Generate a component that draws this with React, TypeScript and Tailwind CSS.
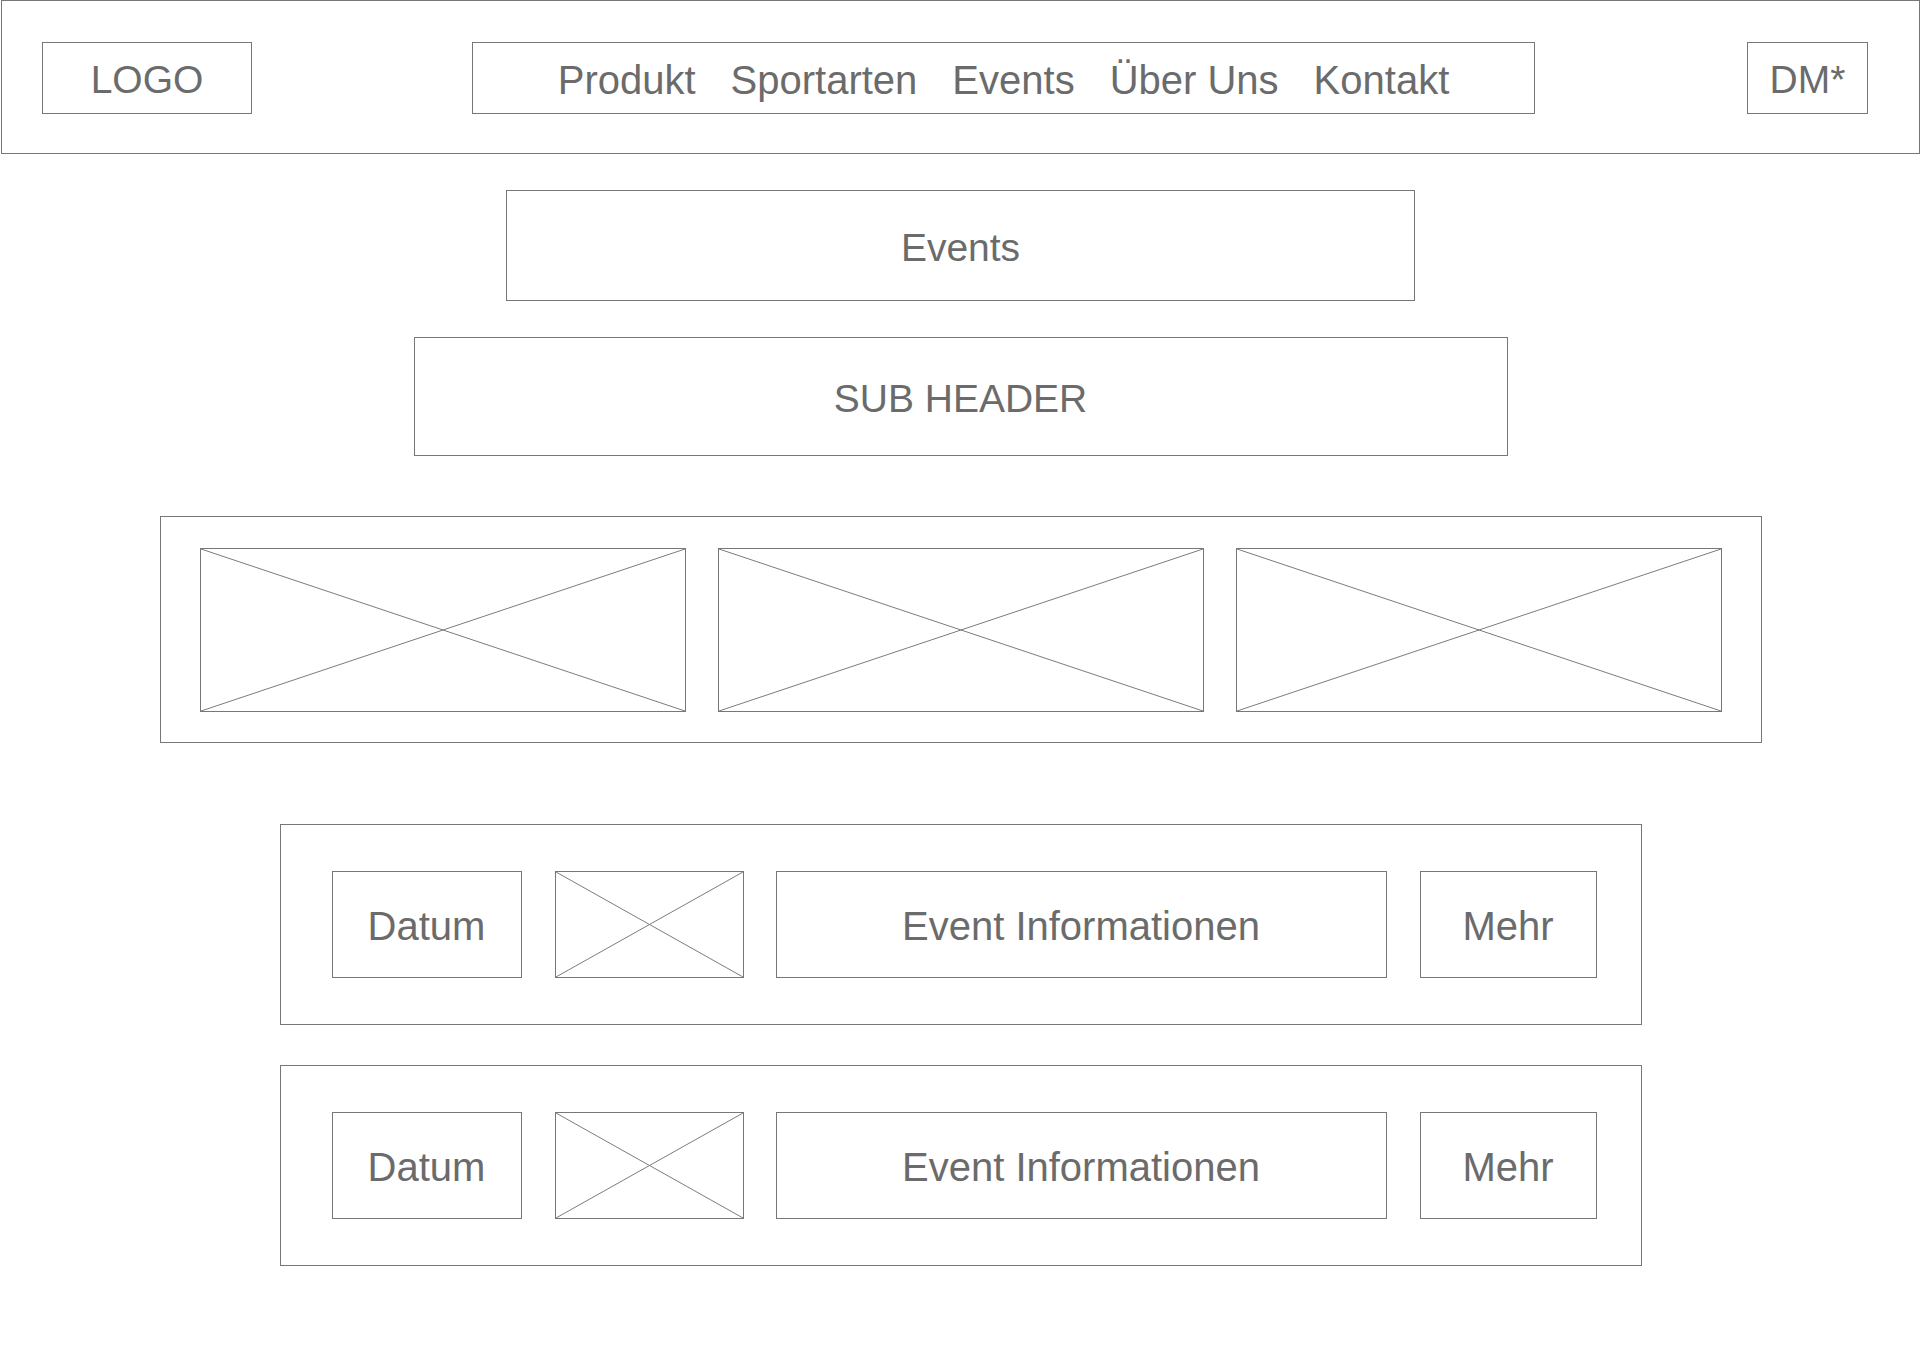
const navItems = ['Produkt', 'Sportarten', 'Events', 'Über Uns', 'Kontakt'];

function Placeholder({ className }: { className: string }) {
  return (
    <div className={`relative border border-[#777] ${className}`}>
      <svg className="absolute inset-0 h-full w-full" viewBox="0 0 100 100" preserveAspectRatio="none">
        <line x1="0" y1="0" x2="100" y2="100" stroke="#7c7c7c" strokeWidth="1" vectorEffect="non-scaling-stroke" />
        <line x1="100" y1="0" x2="0" y2="100" stroke="#7c7c7c" strokeWidth="1" vectorEffect="non-scaling-stroke" />
      </svg>
    </div>
  );
}

function Box({ className, children }: { className: string; children: React.ReactNode }) {
  return (
    <div className={`flex shrink-0 items-center justify-center border border-[#777] pt-[3px] ${className}`}>
      {children}
    </div>
  );
}

function EventRow() {
  return (
    <div className="flex h-[201px] w-[1362px] items-center border border-[#777] pl-[51px] text-[40px]">
      <Box className="h-[107px] w-[190px]">Datum</Box>
      <Placeholder className="ml-[33px] h-[107px] w-[189px] shrink-0" />
      <Box className="ml-[32px] h-[107px] w-[611px]">Event Informationen</Box>
      <Box className="ml-[33px] h-[107px] w-[177px]">Mehr</Box>
    </div>
  );
}

export default function App() {
  return (
    <div className="min-h-[1351px] w-[1921px] bg-white font-['Liberation_Sans',Arial,sans-serif] text-[39px] leading-none text-[#6b6b6b]">
      <header className="ml-px flex h-[154px] w-[1919px] items-center border border-[#777] pl-[40px] pt-[2px]">
        <Box className="h-[72px] w-[210px]">LOGO</Box>
        <nav className="ml-[220px] flex h-[72px] w-[1063px] shrink-0 items-center justify-center gap-[35px] border border-[#777] pt-[3px] text-[40px]">
          {navItems.map((item) => (
            <span key={item}>{item}</span>
          ))}
        </nav>
        <Box className="ml-[212px] h-[72px] w-[121px]">DM*</Box>
      </header>

      <div className="flex flex-col items-center">
        <Box className="mt-[36px] h-[111px] w-[909px]">Events</Box>
        <Box className="mt-[36px] h-[119px] w-[1094px]">SUB HEADER</Box>

        <div className="mt-[60px] flex h-[227px] w-[1602px] items-center gap-[32px] border border-[#777] px-[39px]">
          <Placeholder className="h-[164px] w-[486px]" />
          <Placeholder className="h-[164px] w-[486px]" />
          <Placeholder className="h-[164px] w-[486px]" />
        </div>

        <div className="mt-[81px] flex flex-col gap-[40px]">
          <EventRow />
          <EventRow />
        </div>
      </div>
    </div>
  );
}
